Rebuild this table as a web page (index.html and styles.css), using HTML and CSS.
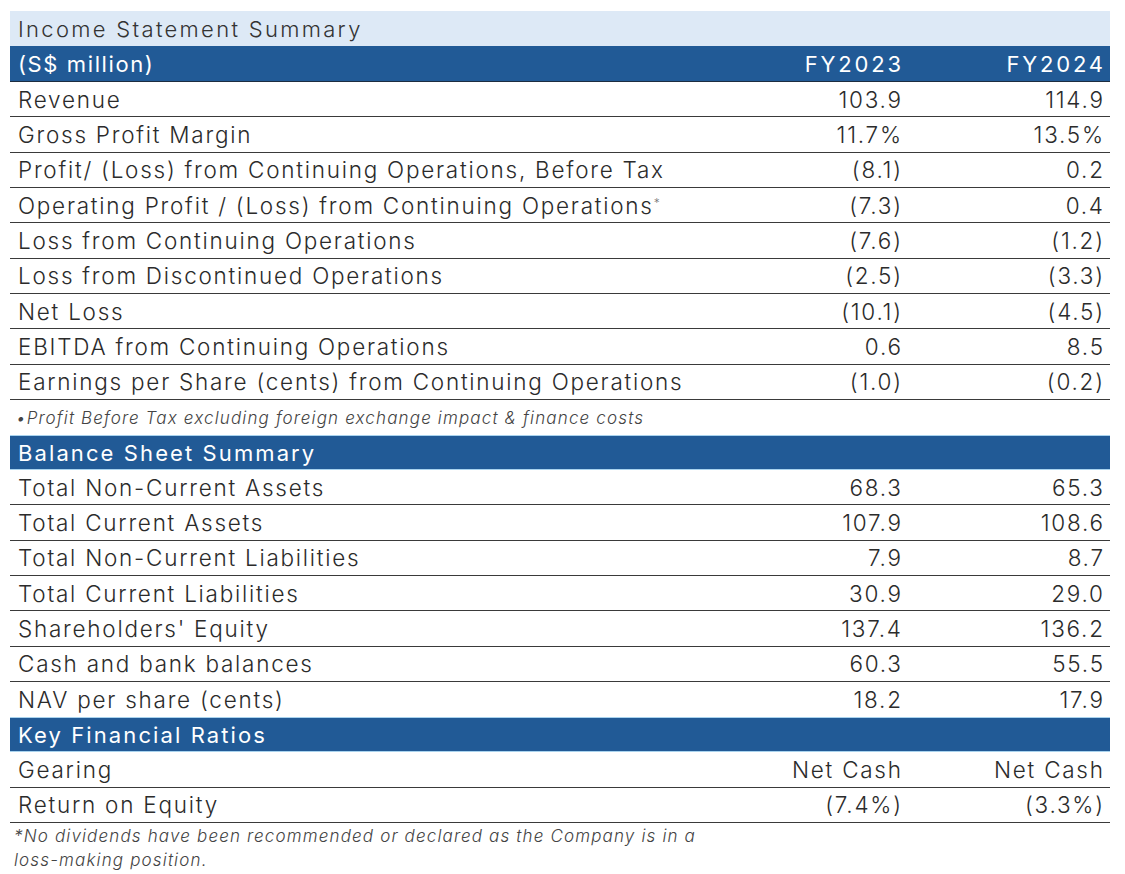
FILE: index.html
```html
<!DOCTYPE html>
<html>
<head>
<meta charset="utf-8">
<link rel="stylesheet" href="styles.css">
</head>
<body>
<div class="sheet">
  <div class="title">Income Statement Summary</div>
  <div class="row head"><span class="lbl">(S$ million)</span><span class="v1">FY2023</span><span class="v2">FY2024</span></div>
  <div class="row"><span class="lbl">Revenue</span><span class="v1">103.9</span><span class="v2">114.9</span></div>
  <div class="row"><span class="lbl">Gross Profit Margin</span><span class="v1">11.7%</span><span class="v2">13.5%</span></div>
  <div class="row"><span class="lbl">Profit/ (Loss) from Continuing Operations, Before Tax</span><span class="v1">(8.1)</span><span class="v2">0.2</span></div>
  <div class="row"><span class="lbl">Operating Profit / (Loss) from Continuing Operations<sup class="ast">*</sup></span><span class="v1">(7.3)</span><span class="v2">0.4</span></div>
  <div class="row"><span class="lbl">Loss from Continuing Operations</span><span class="v1">(7.6)</span><span class="v2">(1.2)</span></div>
  <div class="row"><span class="lbl">Loss from Discontinued Operations</span><span class="v1">(2.5)</span><span class="v2">(3.3)</span></div>
  <div class="row"><span class="lbl">Net Loss</span><span class="v1">(10.1)</span><span class="v2">(4.5)</span></div>
  <div class="row"><span class="lbl">EBITDA from Continuing Operations</span><span class="v1">0.6</span><span class="v2">8.5</span></div>
  <div class="row"><span class="lbl">Earnings per Share (cents) from Continuing Operations</span><span class="v1">(1.0)</span><span class="v2">(0.2)</span></div>
  <div class="note">•Profit Before Tax excluding foreign exchange impact &amp; finance costs</div>
  <div class="band">Balance Sheet Summary</div>
  <div class="row"><span class="lbl">Total Non-Current Assets</span><span class="v1">68.3</span><span class="v2">65.3</span></div>
  <div class="row"><span class="lbl">Total Current Assets</span><span class="v1">107.9</span><span class="v2">108.6</span></div>
  <div class="row"><span class="lbl">Total Non-Current Liabilities</span><span class="v1">7.9</span><span class="v2">8.7</span></div>
  <div class="row"><span class="lbl">Total Current Liabilities</span><span class="v1">30.9</span><span class="v2">29.0</span></div>
  <div class="row"><span class="lbl">Shareholders' Equity</span><span class="v1">137.4</span><span class="v2">136.2</span></div>
  <div class="row"><span class="lbl">Cash and bank balances</span><span class="v1">60.3</span><span class="v2">55.5</span></div>
  <div class="row last-before-band"><span class="lbl">NAV per share (cents)</span><span class="v1">18.2</span><span class="v2">17.9</span></div>
  <div class="band">Key Financial Ratios</div>
  <div class="row"><span class="lbl">Gearing</span><span class="v1">Net Cash</span><span class="v2">Net Cash</span></div>
  <div class="row"><span class="lbl">Return on Equity</span><span class="v1">(7.4%)</span><span class="v2">(3.3%)</span></div>
  <div class="note note2">*No dividends have been recommended or declared as the Company is in a<br>loss-making position.</div>
</div>
</body>
</html>
```

FILE: styles.css
```css
html, body {
  margin: 0;
  padding: 0;
  background: #ffffff;
}
body {
  font-family: "Inter", "Open Sans", sans-serif;
  font-weight: 300;
  color: #2b2b2b;
  width: 1125px;
  height: 874px;
  overflow: hidden;
}
.sheet {
  margin: 11px 0 0 10px;
  width: 1100px;
  display: flex;
  flex-direction: column;
}
.title {
  height: 35px;
  box-sizing: border-box;
  background: #dde9f6;
  font-size: 22px;
  letter-spacing: 2.3px;
  line-height: 36px;
  padding-left: 8px;
  color: #333;
}
.row {
  display: grid;
  grid-template-columns: 1fr 200px 202px;
  height: 35.33px;
  box-sizing: border-box;
  border-bottom: 1.5px solid #3a3a3a;
  align-items: center;
  font-size: 22.5px;
  letter-spacing: 1.75px;
  padding-right: 7px;
}
.row .lbl { padding-left: 8px; white-space: nowrap; }
.row .v1, .row .v2 { text-align: right; margin-right: -1.75px; }
.row.head {
  background: #215a96;
  color: #fff;
  height: 36px;
  font-size: 22px;
  font-weight: 400;
  letter-spacing: 1.6px;
  border-bottom: 1.5px solid #1d2d40;
}
.row.head .v1, .row.head .v2 { letter-spacing: 2.8px; margin-right: -2.8px; }
.last-before-band { border-bottom: none; }
.ast {
  font-size: 12px;
  vertical-align: 7px;
  color: #777;
  line-height: 0;
  letter-spacing: 0;
}
.note {
  height: 35px;
  font-size: 17px;
  letter-spacing: 1.15px;
  font-style: italic;
  color: #444;
  padding-left: 6px;
  line-height: 37px;
  box-sizing: border-box;
}
.note2 {
  height: auto;
  line-height: 24px;
  padding-top: 1px;
  padding-left: 4px;
}
.band {
  height: 35px;
  background: #215a96;
  color: #fff;
  font-size: 22px;
  font-weight: 400;
  letter-spacing: 2.1px;
  line-height: 35px;
  padding-left: 8px;
  box-sizing: border-box;
  border-top: 1px solid #a9d3ee;
  border-bottom: 1px solid #a9d3ee;
}
```
